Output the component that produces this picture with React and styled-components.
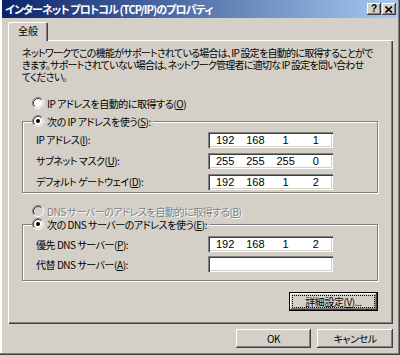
import React from 'react';
import styled, { createGlobalStyle } from 'styled-components';

const FACE = '#D4D0C8';
const SHADOW = '#808080';
const DARK = '#404040';

const GlobalStyle = createGlobalStyle`
  html, body { margin: 0; padding: 0; background: ${FACE}; }
  body {
    font-family: "Noto Sans CJK JP", "Noto Sans", sans-serif;
    font-size: 10px;
    letter-spacing: -0.45px;
    color: #000;
    font-feature-settings: "palt";
  }
  * { box-sizing: border-box; }
`;

const Window = styled.div`
  width: 400px;
  height: 355px;
  background: ${FACE};
  padding: 0 2px 2px 2px;
  box-shadow: inset -1px -1px ${DARK}, inset -2px -2px ${SHADOW}, inset 2px 0 #fff;
  display: flex;
  flex-direction: column;
`;

const TitleBar = styled.div`
  height: 18px;
  display: flex;
  align-items: center;
  padding: 0 2px 0 3px;
  background: linear-gradient(to right, #0a246a, #a6caf0);
  color: #fff;
  font-size: 11px;
  letter-spacing: -0.9px;
  font-weight: bold;
  white-space: nowrap;
`;

const TitleText = styled.span`
  flex: 1;
  line-height: 18px;
`;

const CapButton = styled.div`
  width: 14px;
  height: 12px;
  margin-left: ${p => p.gap || 0}px;
  background: ${FACE};
  box-shadow: inset -1px -1px ${DARK}, inset 1px 1px #fff, inset -2px -2px ${SHADOW};
  display: flex;
  align-items: center;
  justify-content: center;
  color: #000;
  font-family: "Liberation Sans", Arial, sans-serif;
  font-size: 10px;
  letter-spacing: 0;
  font-weight: bold;
  line-height: 1;
`;

const Body = styled.div`
  padding: 4px 5px 0 6px;
  display: flex;
  flex-direction: column;
`;

const TabStrip = styled.div`
  display: flex;
  height: 18px;
`;

const Tab = styled.div`
  position: relative;
  z-index: 1;
  width: 40px;
  height: 19px;
  background: ${FACE};
  border-radius: 2px 2px 0 0;
  box-shadow: inset 1px 1px #fff, inset -1px 0 ${DARK}, inset -2px 0 ${SHADOW};
  text-align: center;
  line-height: 18px;
  letter-spacing: 0;
`;

const Panel = styled.div`
  width: 385px;
  height: 284px;
  padding: 7px 0 0 14px;
  box-shadow: inset 1px 1px #fff, inset -1px -1px ${DARK}, inset -2px -2px ${SHADOW};
  display: flex;
  flex-direction: column;
`;

const Desc = styled.p`
  margin: 0;
  line-height: 12px;
  letter-spacing: -0.75px;
  white-space: nowrap;
`;

const RadioRow = styled.div`
  display: flex;
  align-items: center;
  height: 14px;
  margin: ${p => p.m || '0'};
  color: ${p => (p.disabled ? SHADOW : '#000')};
  text-shadow: ${p => (p.disabled ? '1px 1px 0 #fff' : 'none')};
  white-space: nowrap;
`;

const RadioText = styled.span`
  margin-left: 3px;
`;

const GroupBox = styled.div`
  width: 356px;
  margin-top: ${p => p.top}px;
  padding: 0 0 ${p => p.bottom}px 13px;
  border: 1px solid ${SHADOW};
  box-shadow: inset 1px 1px #fff, 1px 1px #fff;
  display: flex;
  flex-direction: column;
`;

const Legend = styled.div`
  align-self: flex-start;
  margin: -8px 0 ${p => p.after}px -4px;
  padding-right: 2px;
  background: ${FACE};
`;

const FieldRow = styled.div`
  display: grid;
  grid-template-columns: 172px 125px;
  align-items: center;
  height: ${p => p.h}px;
  white-space: nowrap;
`;

const AddrBox = styled.div`
  height: 16px;
  background: #fff;
  box-shadow: inset 1px 1px ${SHADOW}, inset 2px 2px ${DARK}, inset -1px -1px #fff, inset -2px -2px ${FACE};
  display: grid;
  grid-template-columns: repeat(4, 1fr);
  padding: 0 2px;
  align-items: center;
  font-family: "Liberation Sans", Arial, sans-serif;
  font-size: 11px;
  letter-spacing: 0;
  line-height: 16px;
`;

const Octet = styled.span`
  text-align: center;
`;

const ButtonRow = styled.div`
  display: flex;
  justify-content: flex-end;
  gap: 6px;
  margin: ${p => p.m};
  width: ${p => p.w}px;
`;

const Button = styled.div`
  width: ${p => p.w}px;
  height: 19px;
  background: ${FACE};
  display: flex;
  align-items: center;
  justify-content: center;
  white-space: nowrap;
  box-shadow: ${p =>
    p.focused
      ? `inset 0 0 0 1px #000, inset -2px -2px ${DARK}, inset 2px 2px #fff, inset -3px -3px ${SHADOW}`
      : `inset -1px -1px ${DARK}, inset 1px 1px #fff, inset -2px -2px ${SHADOW}`};
`;

const FocusRing = styled.span`
  display: flex;
  align-items: center;
  justify-content: center;
  width: calc(100% - 8px);
  height: calc(100% - 8px);
  outline: 1px dotted #000;
`;

const Radio = ({ checked, disabled }) => (
  <svg width="12" height="12" viewBox="0 0 12 12">
    <circle cx="6" cy="6" r="4.5" fill={disabled ? FACE : '#fff'} />
    <path d="M2.11 9.89 A5.5 5.5 0 0 1 9.89 2.11" fill="none" stroke={SHADOW} />
    <path d="M9.89 2.11 A5.5 5.5 0 0 1 2.11 9.89" fill="none" stroke="#fff" />
    <path d="M2.82 9.18 A4.5 4.5 0 0 1 9.18 2.82" fill="none" stroke={DARK} />
    <path d="M9.18 2.82 A4.5 4.5 0 0 1 2.82 9.18" fill="none" stroke={FACE} />
    {checked && <circle cx="6" cy="6" r="2" fill="#000" />}
  </svg>
);

const Addr = ({ value }) => (
  <AddrBox>
    {(value || ['', '', '', '']).map((v, i) => (
      <Octet key={i}>{v}</Octet>
    ))}
  </AddrBox>
);

export default function App() {
  return (
    <>
      <GlobalStyle />
      <Window>
        <TitleBar>
          <TitleText>インターネット プロトコル (TCP/IP)のプロパティ</TitleText>
          <CapButton>?</CapButton>
          <CapButton gap={1}>
            <svg width="8" height="7" viewBox="0 0 8 7">
              <path d="M0.5 0.5 L7 6.5 M7 0.5 L0.5 6.5" stroke="#000" strokeWidth="1.6" />
            </svg>
          </CapButton>
        </TitleBar>
        <Body>
          <TabStrip>
            <Tab>全般</Tab>
          </TabStrip>
          <Panel>
            <Desc>
              ネットワークでこの機能がサポートされている場合は、IP 設定を自動的に取得することがで
              <br />
              きます。サポートされていない場合は、ネットワーク管理者に適切な IP 設定を問い合わせ
              <br />
              てください。
            </Desc>
            <RadioRow m="13px 0 0 10px">
              <Radio />
              <RadioText>IP アドレスを自動的に取得する(<u>O</u>)</RadioText>
            </RadioRow>
            <GroupBox top={11} bottom={0}>
              <Legend after={1}>
                <RadioRow>
                  <Radio checked />
                  <RadioText>次の IP アドレスを使う(<u>S</u>):</RadioText>
                </RadioRow>
              </Legend>
              <FieldRow h={21}>
                <span>IP アドレス(<u>I</u>):</span>
                <Addr value={['192', '168', '1', '1']} />
              </FieldRow>
              <FieldRow h={21}>
                <span>サブネット マスク(<u>U</u>):</span>
                <Addr value={['255', '255', '255', '0']} />
              </FieldRow>
              <FieldRow h={21}>
                <span>デフォルト ゲートウェイ(<u>D</u>):</span>
                <Addr value={['192', '168', '1', '2']} />
              </FieldRow>
            </GroupBox>
            <RadioRow m="11px 0 0 10px" disabled>
              <Radio disabled />
              <RadioText>DNS サーバーのアドレスを自動的に取得する(<u>B</u>)</RadioText>
            </RadioRow>
            <GroupBox top={6} bottom={6}>
              <Legend after={3}>
                <RadioRow>
                  <Radio checked />
                  <RadioText>次の DNS サーバーのアドレスを使う(<u>E</u>):</RadioText>
                </RadioRow>
              </Legend>
              <FieldRow h={20}>
                <span>優先 DNS サーバー(<u>P</u>):</span>
                <Addr value={['192', '168', '1', '2']} />
              </FieldRow>
              <FieldRow h={20}>
                <span>代替 DNS サーバー(<u>A</u>):</span>
                <Addr />
              </FieldRow>
            </GroupBox>
            <ButtonRow m="11px 0 0 0" w={356}>
              <Button w={89} focused>
                <FocusRing>詳細設定(<u>V</u>)...</FocusRing>
              </Button>
            </ButtonRow>
          </Panel>
          <ButtonRow m="5px 0 0 0" w={385}>
            <Button w={75}>OK</Button>
            <Button w={76}>キャンセル</Button>
          </ButtonRow>
        </Body>
      </Window>
    </>
  );
}
